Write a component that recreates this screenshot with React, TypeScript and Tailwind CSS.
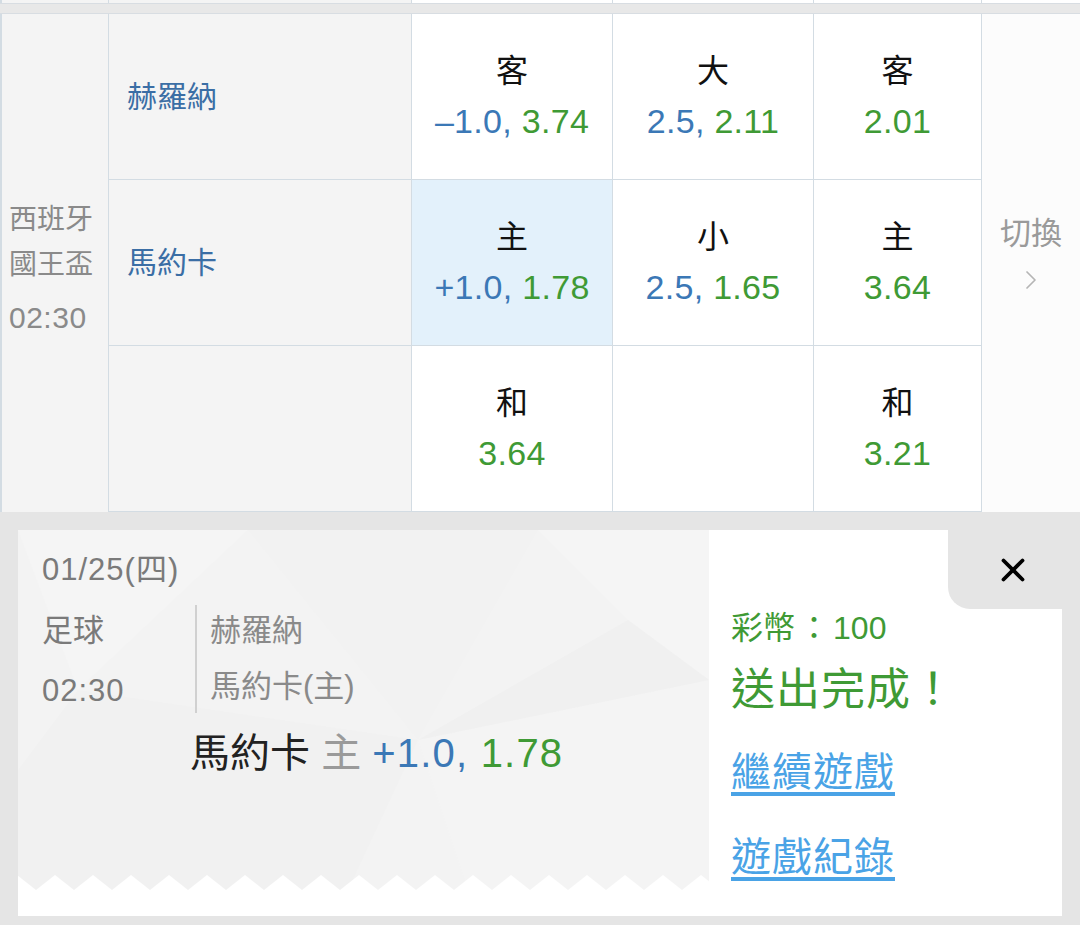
import { X, ChevronRight } from 'lucide-react';

const FONT = { fontFamily: '"Liberation Sans", "Noto Sans CJK TC", sans-serif' };

type Odd = { label: string; line?: string; price: string; active?: boolean } | null;

const rows: { team: string; odds: Odd[] }[] = [
  {
    team: '赫羅納',
    odds: [
      { label: '客', line: '–1.0', price: '3.74' },
      { label: '大', line: '2.5', price: '2.11' },
      { label: '客', price: '2.01' },
    ],
  },
  {
    team: '馬約卡',
    odds: [
      { label: '主', line: '+1.0', price: '1.78', active: true },
      { label: '小', line: '2.5', price: '1.65' },
      { label: '主', price: '3.64' },
    ],
  },
  {
    team: '',
    odds: [{ label: '和', price: '3.64' }, null, { label: '和', price: '3.21' }],
  },
];

function OddCell({ odd, row, col }: { odd: Odd; row: number; col: number }) {
  return (
    <div
      className={`flex flex-col items-center justify-center border-r border-b border-[#d3dce3] ${
        odd?.active ? 'bg-[#e3f1fb]' : 'bg-white'
      }`}
      style={{ gridRow: row, gridColumn: col }}
    >
      {odd && (
        <>
          <div className="text-[32px] leading-[48px] text-[#111]">{odd.label}</div>
          <div className="text-[34px] leading-[50px] mt-[1px] tracking-[0.3px]">
            {odd.line && <span className="text-[#3b78b6]">{odd.line}, </span>}
            <span className="text-[#3f9a35]">{odd.price}</span>
          </div>
        </>
      )}
    </div>
  );
}

export default function App() {
  return (
    <div className="w-[1080px] h-[925px] overflow-hidden bg-[#e5e5e5]" style={FONT}>
      {/* Odds table */}
      <div className="grid grid-cols-[109px_303px_201px_201px_168px_98px] grid-rows-[3px_11px_166px_166px_166px] bg-[#f4f4f4]">
        {/* tail of the previous row */}
        <div className="border-l-2 border-r border-[#d3dce3] bg-[#f4f4f4]" />
        <div className="border-r border-[#d3dce3] bg-[#f4f4f4]" />
        <div className="border-r border-[#d3dce3] bg-white" />
        <div className="border-r border-[#d3dce3] bg-white" />
        <div className="border-r border-[#d3dce3] bg-white" />
        <div className="bg-white" />
        <div className="col-span-6 bg-[#e8e8e8] border-y border-[#d8dde2]" />

        {/* league */}
        <div className="border-l-2 border-r border-[#d3dce3] bg-[#f4f4f4] flex flex-col justify-center pl-[7px] pt-[10px] text-[#8a8a8a] text-[28px]" style={{ gridRow: '3 / 6', gridColumn: 1 }}>
          <div className="leading-[45px]">西班牙</div>
          <div className="leading-[45px]">國王盃</div>
          <div className="leading-[45px] mt-[8px] text-[30px] tracking-[0.5px]">02:30</div>
        </div>

        {rows.map((r, i) => (
          <div key={'t' + i} className="flex items-center pl-[18px] border-r border-b border-[#d3dce3] bg-[#f4f4f4] text-[30px] text-[#3b6ea5]" style={{ gridRow: i + 3, gridColumn: 2 }}>
            {r.team}
          </div>
        ))}
        {rows.map((r, i) =>
          r.odds.map((o, j) => <OddCell key={i + '-' + j} odd={o} row={i + 3} col={j + 3} />)
        )}

        {/* switch */}
        <div className="flex flex-col items-center justify-center pb-[16px] bg-[#fcfcfc] text-[#9a9a9a]" style={{ gridRow: '3 / 6', gridColumn: 6 }}>
          <div className="text-[31px] leading-[40px]">切換</div>
          <ChevronRight size={32} strokeWidth={1.3} className="mt-[10px] text-[#b5b5b5]" />
        </div>
      </div>

      {/* Receipt */}
      <div className="pt-[18px] px-[18px]">
        <div className="relative bg-white h-[386px] flex flex-col">
          <div className="flex h-[360px]">
            <div className="relative w-[691px] bg-[#f3f3f3] overflow-hidden">
              <svg className="absolute inset-0" width="691" height="360">
                <polygon points="0,0 230,0 60,160" fill="#f5f5f5" />
                <polygon points="230,0 520,0 400,210" fill="#f2f2f2" />
                <polygon points="520,0 691,0 691,150 610,90" fill="#f5f5f5" />
                <polygon points="60,160 400,210 330,360 0,360 0,240" fill="#f1f1f1" />
                <polygon points="400,210 691,150 691,360 450,360" fill="#f4f4f4" />
                <polygon points="610,90 691,150 400,210" fill="#f0f0f0" />
                <defs>
                  <pattern id="zig" x="18" y="0" width="38" height="15" patternUnits="userSpaceOnUse">
                    <polygon points="0,15 19,0 38,15" fill="#ffffff" />
                  </pattern>
                </defs>
                <rect x="0" y="345" width="691" height="15" fill="url(#zig)" />
              </svg>

              <div className="relative pl-[24px] pt-[20px] text-[#7a7a7a]">
                <div className="text-[31px] leading-[40px] tracking-[1px]">01/25(四)</div>
                <div className="flex mt-[13px]">
                  <div className="w-[153px] text-[31px]">
                    <div className="leading-[56px]">足球</div>
                    <div className="leading-[56px] mt-[4px] tracking-[1px]">02:30</div>
                  </div>
                  <div className="w-[2px] h-[108px] bg-[#d0d0d0] mt-[2px]" />
                  <div className="pl-[13px] text-[31px] text-[#8a8a8a]">
                    <div className="leading-[56px]">赫羅納</div>
                    <div className="leading-[56px]">馬約卡(主)</div>
                  </div>
                </div>
                <div className="pl-[148px] mt-[8px] text-[40px] leading-[52px] whitespace-nowrap">
                  <span className="text-[#222]">馬約卡 </span>
                  <span className="text-[#9a9a9a]">主 </span>
                  <span className="text-[#3b78b6] tracking-[1.2px]">+1.0, </span>
                  <span className="text-[#3f9a35] tracking-[1.2px]">1.78</span>
                </div>
              </div>
            </div>

            <div className="flex-1 pl-[22px] pt-[78px] text-[#3f9a35]">
              <div className="text-[32px] leading-[40px]">
                彩幣<span className="mx-[3px]">：</span>100
              </div>
              <div className="text-[44px] leading-[56px] mt-[14px] tracking-[1px]">送出完成！</div>
              <a className="block text-[40px] leading-[52px] mt-[28px] tracking-[1px] text-[#4aa3e6] underline underline-offset-[6px]">繼續遊戲</a>
              <a className="block text-[40px] leading-[52px] mt-[33px] tracking-[1px] text-[#4aa3e6] underline underline-offset-[6px]">遊戲紀錄</a>
            </div>
          </div>
          <div className="h-[26px] bg-white" />

          <button className="absolute top-0 right-0 w-[114px] h-[79px] bg-[#e5e5e5] rounded-bl-[22px] flex items-center justify-center pl-[16px]">
            <X size={38} strokeWidth={2.4} className="text-black" />
          </button>
        </div>
      </div>
    </div>
  );
}
